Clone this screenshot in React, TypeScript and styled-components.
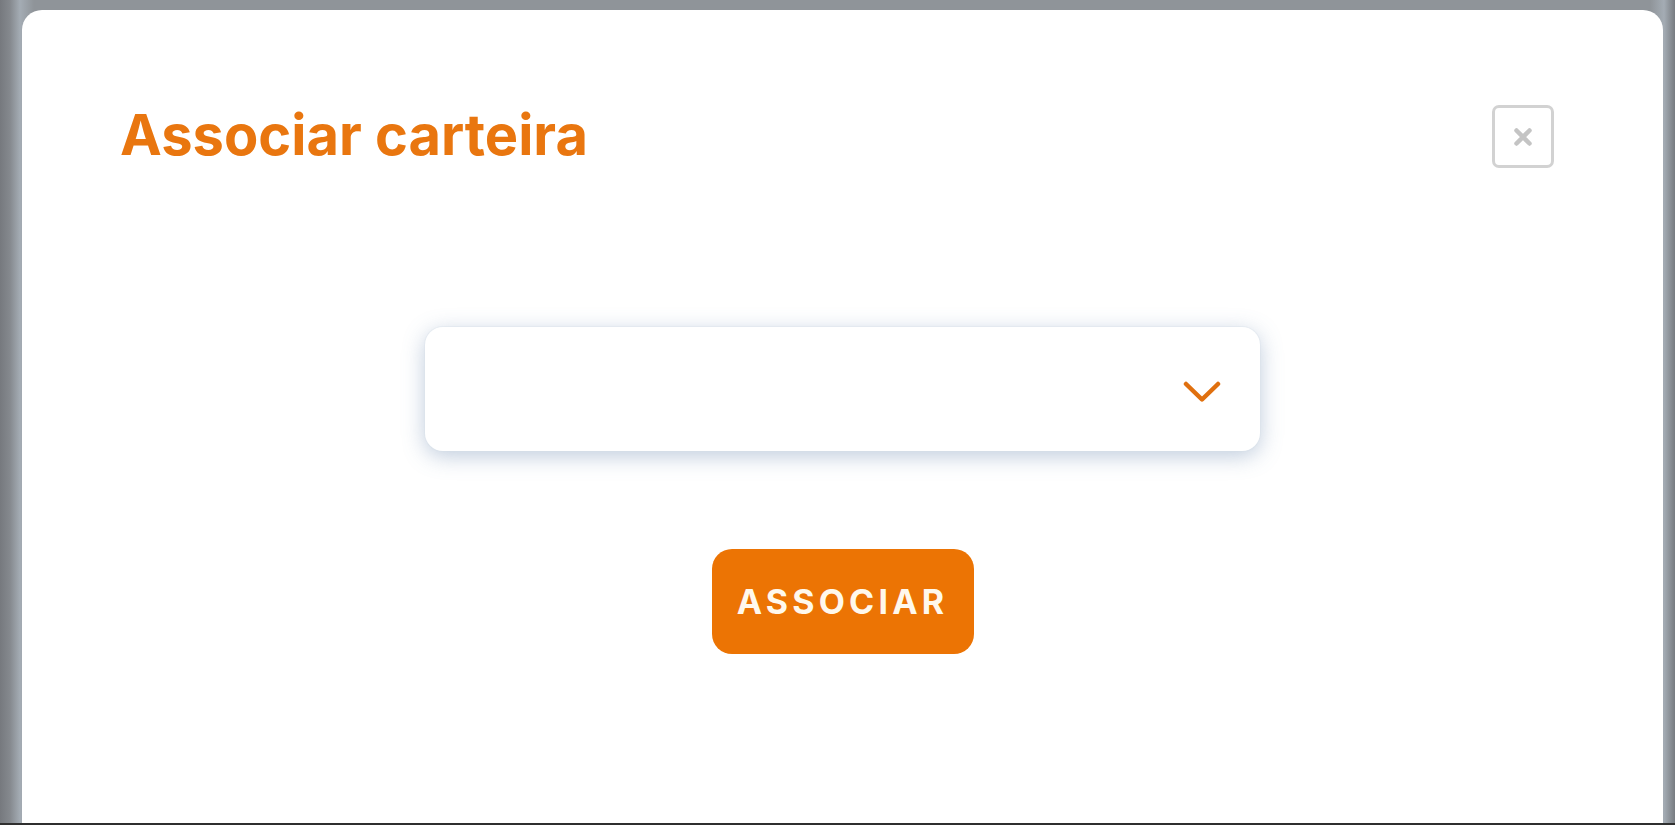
import styled, { createGlobalStyle } from "styled-components";

const GlobalStyle = createGlobalStyle`
  html, body {
    margin: 0;
    padding: 0;
    height: 100%;
    overflow: hidden;
  }
  body {
    font-family: Inter, "Noto Sans", sans-serif;
  }
  #root {
    height: 100%;
  }
`;

const Backdrop = styled.div`
  height: 100vh;
  display: flex;
  flex-direction: column;
  background: linear-gradient(
    90deg,
    #76797e 0px,
    #85898e 10px,
    #a4acb4 20px,
    #8f9499 34px,
    #8f9499 1650px,
    #a4acb4 1664px,
    #777b80 1675px
  );
`;

const Stage = styled.div`
  flex: 1;
  display: flex;
  padding: 10px 12px 0 22px;
  min-height: 0;
`;

const Modal = styled.section`
  flex: 1;
  display: flex;
  flex-direction: column;
  background: #ffffff;
  border-radius: 20px 20px 0 0;
  padding-top: 89px;
`;

const Header = styled.header`
  display: flex;
  justify-content: space-between;
  align-items: flex-start;
  padding: 0 109px 0 98px;
`;

const Title = styled.h2`
  margin: 3px 0 0;
  font-family: Inter, "Noto Sans", sans-serif;
  font-weight: 700;
  font-size: 56px;
  line-height: 1.2;
  color: #e9760f;
`;

const CloseButton = styled.button`
  margin-top: 6px;
  width: 62px;
  height: 63px;
  display: flex;
  align-items: center;
  justify-content: center;
  background: #ffffff;
  border: 3px solid #d2d2d2;
  border-radius: 7px;
  padding: 0;
  cursor: pointer;
`;

const Body = styled.div`
  display: flex;
  flex-direction: column;
  align-items: center;
`;

const SelectBox = styled.div`
  margin-top: 158px;
  width: 835px;
  height: 124px;
  box-sizing: border-box;
  display: flex;
  align-items: center;
  justify-content: flex-end;
  padding: 6px 39px 0 0;
  background: #ffffff;
  border-radius: 18px;
  box-shadow: 0 0 0 1px rgba(215, 223, 233, 0.35),
    0 5px 22px rgba(100, 132, 172, 0.42);
  cursor: pointer;
`;

const PrimaryButton = styled.button`
  margin-top: 98px;
  width: 262px;
  height: 105px;
  border: none;
  border-radius: 20px;
  background: #ec7404;
  color: #fff8ec;
  font-family: Inter, "Noto Sans", sans-serif;
  font-weight: 700;
  font-size: 34px;
  letter-spacing: 4.2px;
  text-transform: uppercase;
  cursor: pointer;
`;

const BottomBar = styled.div`
  height: 2px;
  background: #2f2f2f;
`;

function CloseIcon() {
  return (
    <svg width="22" height="22" viewBox="0 0 22 22" fill="none">
      <path
        d="M4.5 4.5 L17.5 17.5 M17.5 4.5 L4.5 17.5"
        stroke="#c4c4c4"
        strokeWidth="4.5"
        strokeLinecap="round"
      />
    </svg>
  );
}

function Chevron() {
  return (
    <svg width="38" height="22" viewBox="0 0 38 22" fill="none">
      <path
        d="M3 3 L19 18.5 L35 3"
        stroke="#e0700f"
        strokeWidth="4.5"
        strokeLinecap="round"
        strokeLinejoin="round"
      />
    </svg>
  );
}

export default function App() {
  return (
    <>
      <GlobalStyle />
      <Backdrop>
        <Stage>
          <Modal>
            <Header>
              <Title>Associar carteira</Title>
              <CloseButton aria-label="Fechar">
                <CloseIcon />
              </CloseButton>
            </Header>
            <Body>
              <SelectBox role="combobox">
                <Chevron />
              </SelectBox>
              <PrimaryButton type="button">Associar</PrimaryButton>
            </Body>
          </Modal>
        </Stage>
        <BottomBar />
      </Backdrop>
    </>
  );
}
